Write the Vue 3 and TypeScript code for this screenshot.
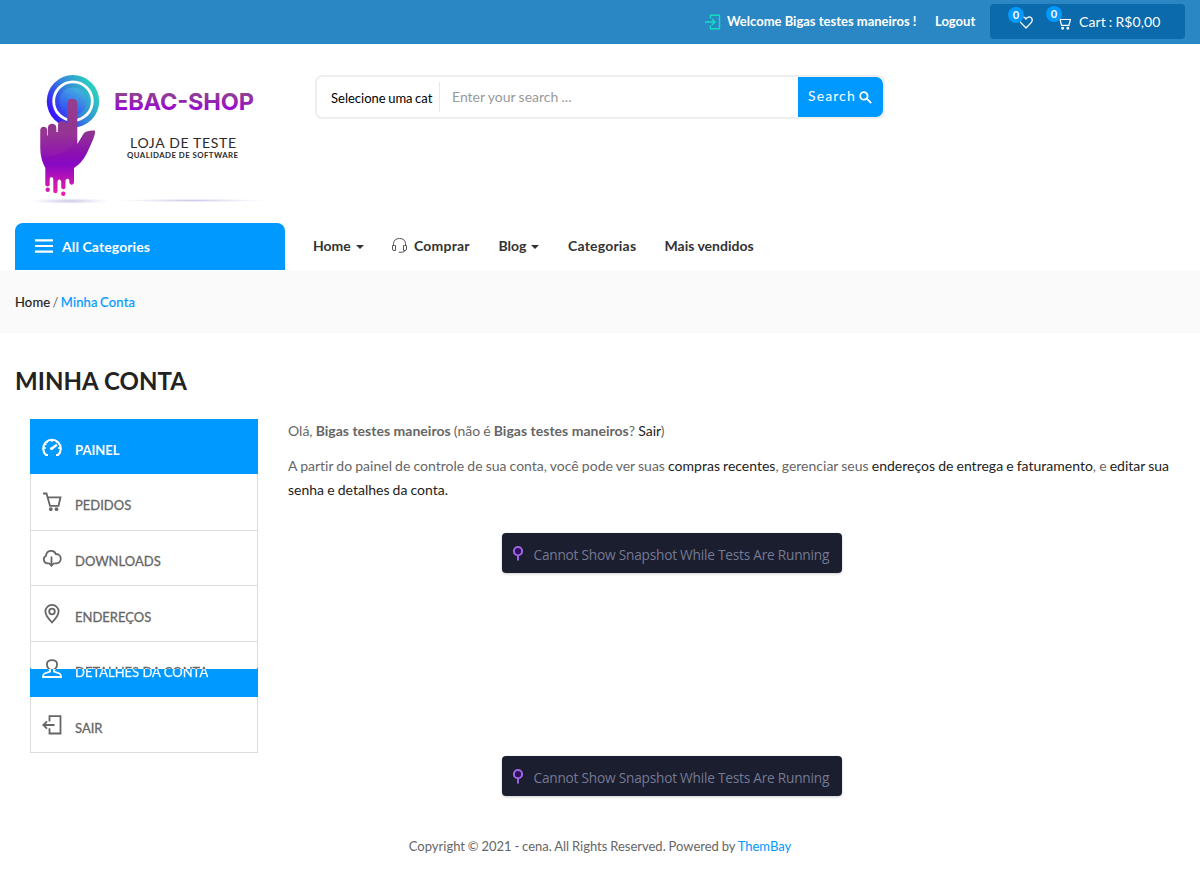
<script setup lang="ts">
interface MenuItem {
  label: string
  icon: string
  state?: 'active' | 'half'
}

const account: MenuItem[] = [
  { label: 'PAINEL', icon: 'gauge', state: 'active' },
  { label: 'PEDIDOS', icon: 'cart' },
  { label: 'DOWNLOADS', icon: 'cloud' },
  { label: 'ENDEREÇOS', icon: 'pin' },
  { label: 'DETALHES DA CONTA', icon: 'user', state: 'half' },
  { label: 'SAIR', icon: 'exit' },
]
</script>

<template>
  <div class="page">
    <div class="topbar">
      <svg class="login" width="16" height="16" viewBox="0 0 16 16" fill="none" stroke="#10e0c0" stroke-width="1.4">
        <path d="M5.500 4.500V1.300h9v13.400h-9v-3.200M0 8h9.500M7 5l3 3-3 3" />
      </svg>
      <span class="welcome">Welcome Bigas testes maneiros !</span>
      <a class="logout">Logout</a>
      <div class="cartbox">
        <span class="mini wish">
          <svg width="14" height="13" viewBox="0 0 14 13" fill="none" stroke="#fff" stroke-width="1.3">
            <path d="M7 12 1.800 6.600C.3 5 .5 2.600 2 1.500 3.600.4 5.800.9 7 3c1.200-2.100 3.400-2.600 5-1.500 1.500 1.100 1.700 3.500.2 5.100Z" />
          </svg>
          <b>0</b>
        </span>
        <span class="mini bag">
          <svg width="14" height="14" viewBox="0 0 20 20" fill="none" stroke="#fff" stroke-width="1.700">
            <path d="M0 2h3.500l3 11.500h10.500l2.200-8.500H4.500" />
            <circle cx="8" cy="17.500" r="1.200" /><circle cx="15.500" cy="17.500" r="1.200" />
          </svg>
          <b>0</b>
        </span>
        <span class="total">Cart : R$0,00</span>
      </div>
    </div>

    <header class="header">
      <svg class="logo" width="250" height="145" viewBox="0 0 250 145">
        <defs>
          <linearGradient id="ring" x1="0" y1="0.800" x2="1" y2="0.200">
            <stop offset="0.050" stop-color="#3808ff" /><stop offset="0.500" stop-color="#3484dc" /><stop offset="1" stop-color="#2ae0b8" />
          </linearGradient>
          <linearGradient id="disc" x1="0.100" y1="1" x2="0.700" y2="0">
            <stop offset="0" stop-color="#3040f4" /><stop offset="1" stop-color="#42b4de" />
          </linearGradient>
          <linearGradient id="hand" gradientUnits="userSpaceOnUse" x1="0" y1="34" x2="0" y2="130">
            <stop offset="0" stop-color="#983e90" /><stop offset="0.350" stop-color="#903490" /><stop offset="0.580" stop-color="#8a0eb4" /><stop offset="0.680" stop-color="#8808c4" /><stop offset="1" stop-color="#f020a8" />
          </linearGradient>
          <linearGradient id="brand" x1="0" y1="0" x2="0" y2="1">
            <stop offset="0.200" stop-color="#904290" /><stop offset="0.850" stop-color="#9a00da" />
          </linearGradient>
          <radialGradient id="shade">
            <stop offset="0" stop-color="#8878c0" stop-opacity="0.420" /><stop offset="1" stop-color="#a8a0d8" stop-opacity="0" />
          </radialGradient>
        </defs>
        <ellipse cx="50" cy="136" rx="40" ry="3" fill="url(#shade)" />
        <ellipse cx="172" cy="135.500" rx="75" ry="1.700" fill="url(#shade)" />
        <circle cx="53" cy="36.200" r="26.200" fill="url(#ring)" />
        <circle cx="53" cy="36.200" r="19.300" fill="none" stroke="#fff" stroke-width="2.800" />
        <circle cx="53" cy="36.200" r="13.700" fill="url(#disc)" />
        <path fill="url(#hand)" d="M20.300 65C20.300 60.500 27 60.500 27.200 65V70.500H28V62.500C28 57.500 36.300 57.500 36.300 62.500V67H38V60C38 54.500 47.200 54.500 47.200 60V38C47.200 32.300 57.300 32.300 57.300 38V79L64 68Q67 65 75 65.500Q75.500 69 72 77L67 88Q62 98 54 103V117C54 120.500 49.300 120.500 49.300 117V115.500C49.300 113 45.500 113 45.500 116V122C45.500 125 41.200 125 41.200 122V117C41.200 113.500 37.500 113.500 37.500 117V126C37.500 129 33.300 129 33.300 126V114C33.300 111.500 29.700 111.500 29.700 114V119.500C29.700 122 25.300 122 25.300 119.500V103Q20.300 94 20.300 83Z" />
        <path fill="#b13ca0" opacity="0.180" d="M57.300 70C56 82 38 94 20.300 91V64h37Z" />
        <circle cx="27.700" cy="124.700" r="2.200" fill="#d51cac" /><circle cx="43.300" cy="128.700" r="2.200" fill="#ee20aa" />
        <text class="brand" x="94" y="45.300" textLength="140" fill="url(#brand)">EBAC-SHOP</text>
        <text class="tag" x="110" y="82.800" textLength="106">LOJA DE TESTE</text>
        <text class="sub" x="107" y="93" textLength="111">QUALIDADE DE SOFTWARE</text>
      </svg>
      <form class="search">
        <span class="cat">Selecione uma cat</span>
        <span class="placeholder">Enter your search ...</span>
        <span class="go"><span class="label">Search</span>
          <svg width="13" height="13" viewBox="0 0 13 13" fill="none" stroke="#fff" stroke-width="1.800"><circle cx="4.900" cy="4.900" r="3.700" /><path d="m7.700 7.700 4.500 4.500" /></svg>
        </span>
      </form>
    </header>

    <nav class="nav">
      <div class="all">
        <svg width="18" height="14" viewBox="0 0 18 14" stroke="#fff" stroke-width="2.200"><path d="M0 1.300h18M0 7h18M0 12.700h18" /></svg>
        <span>All Categories</span>
      </div>
      <a class="n-home">Home<i class="caret" /></a>
      <a class="n-buy">
        <svg width="15" height="15" viewBox="0 0 15 15" fill="none" stroke="#555" stroke-width="1">
          <path d="M2.500 7.500h-2v3.500q0 1.500 1.500 1.500h1.500v-5Zm10 0h2v3.500q0 1.500-1.500 1.500h-1.500v-5ZM1.500 7.500V5.500Q2 .5 7.500.5t6 5v2M12.800 12.500q-.3 1.700-2.300 1.700H6.800" />
        </svg>
        Comprar
      </a>
      <a class="n-blog">Blog<i class="caret" /></a>
      <a class="n-cat">Categorias</a>
      <a class="n-top">Mais vendidos</a>
    </nav>

    <div class="crumbs"><span class="home">Home</span> / <a>Minha Conta</a></div>

    <h1>MINHA CONTA</h1>

    <main class="main">
      <ul class="menu">
        <li v-for="item in account" :key="item.label" :class="item.state">
          <svg width="20" height="20" viewBox="0 0 20 20" fill="none" stroke="currentColor" stroke-width="1.800">
            <defs>
              <linearGradient id="split" gradientUnits="userSpaceOnUse" x1="0" y1="0" x2="0" y2="20">
                <stop offset="0.480" stop-color="#666" /><stop offset="0.480" stop-color="#fff" />
              </linearGradient>
            </defs>
            <template v-if="item.icon === 'gauge'">
              <path stroke-width="2.200" d="M6 18H4A8.800 8.800 0 1 1 16 18H14" />
              <path stroke-width="1.300" d="M10 2v3M4.200 4.200l1.500 1.500M15.800 4.200l-1.300 1.300M1.500 11H4M18.500 11H16M2.500 7l2 .8" />
              <path stroke-width="2.400" d="M9.500 11.800 15 7.800" /><circle cx="9.500" cy="11.500" r="1.600" fill="currentColor" stroke="none" />
            </template>
            <template v-else-if="item.icon === 'cart'">
              <path d="M1 1.500h3.500l3.500 12.300h8.500l2-8.500H5.500" /><circle cx="8.800" cy="17.200" r="1" /><circle cx="14.500" cy="17.200" r="1" />
            </template>
            <path v-else-if="item.icon === 'cloud'" d="M7 15.300H5a4 4 0 0 1-1-7.500C4.500 2 12 1.300 13.800 6a4.700 4.700 0 0 1 1.200 9.300H12.500M9.500 8.500v9M6.800 15l2.700 2.800 2.700-2.800" />
            <template v-else-if="item.icon === 'pin'">
              <path d="M10 18.500Q3.400 11.500 3.400 7.500a6.600 6.600 0 0 1 13.200 0Q16.600 11.500 10 18.500Z" /><circle cx="10" cy="7.500" r="2.800" />
            </template>
            <path v-else-if="item.icon === 'user'" stroke="url(#split)" d="M8 10.500C5.500 9 4.800 6.700 5 4.800 5.200-.2 14.800-.2 15 4.800c.2 1.900-.5 4.200-3 5.700v2l5.500 2q1.500.6 1.500 3.500H1q0-2.900 1.500-3.500l5.500-2Z" />
            <path v-else d="M7.500 6.500V1.200H18.500V18.500H7.500V13.300M1.500 10H12.500M5 6.300 1.300 10 5 13.700" />
          </svg>
          <span>{{ item.label }}</span>
        </li>
      </ul>
      <section class="content">
        <p class="hello">Olá, <b>Bigas testes maneiros</b> (não é <b>Bigas testes maneiros</b>? <a>Sair</a>)</p>
        <p class="intro">A partir do painel de controle de sua conta, você pode ver suas <a>compras recentes</a>, gerenciar seus <a>endereços de entrega e faturamento</a>, e <a>editar sua<br />senha e detalhes da conta.</a></p>
        <div v-for="n in 2" :key="n" class="notice">
          <svg width="12" height="16" viewBox="0 0 12 16"><path d="M6 9v6.500" stroke="#9f62e6" stroke-width="2" /><circle cx="6" cy="6.200" r="4.100" fill="#321060" stroke="#a066e4" stroke-width="2" /></svg>
          <span>Cannot Show Snapshot While Tests Are Running</span>
        </div>
      </section>
    </main>

    <footer>Copyright © 2021 - cena. All Rights Reserved. Powered by <a>ThemBay</a></footer>
  </div>
</template>

<style>
body { margin: 0; background: #fff; }
</style>

<style scoped>
* { box-sizing: border-box; }
.page { width: 1200px; height: 892px; overflow: hidden; font: 14px/24px Lato, sans-serif; color: #666; }
.page > *, .nav > *, .search > * { white-space: nowrap; }
.topbar { height: 44px; background: #2a87c4; display: flex; align-items: center; justify-content: flex-end; padding: 0 15px 1px 0; color: #fff; }
.login { margin: 1px 6px 0 0; }
.welcome, .logout { font-weight: 700; font-size: 13px; margin-top: -1px; }
.welcome { width: 190px; }
.logout { width: 41px; margin-right: 14px; margin-left: 18px; }
.cartbox { width: 195px; height: 35px; background: #0b6aab; border-radius: 4px; display: flex; align-items: center; padding-left: 29px; }
.mini { position: relative; width: 38px; display: flex; }
.mini svg { margin-top: 2px; }
.mini.bag svg { margin-top: 3px; }
.mini b { position: absolute; left: -11px; top: -7px; width: 16px; height: 16px; border-radius: 50%; background: #09f; font-size: 11px; line-height: 16px; text-align: center; }
.mini.bag { width: 22px; }
.total { font-size: 14px; padding-top: 1px; word-spacing: -0.600px; letter-spacing: 0.080px; }
.header { height: 179px; display: flex; padding: 21px 15px 0 20px; }
.logo { width: 250px; height: 145px; flex: none; }
.brand { font: 700 23.500px Inter, sans-serif; }
.tag { font: 14px Lato, sans-serif; fill: #2b2b2b; }
.sub { font: 700 7.800px Lato, sans-serif; fill: #2b2b2b; }
.search { width: 570px; height: 44px; margin: 10px 0 0 45px; border: 2px solid #efefef; border-radius: 7px; display: flex; align-items: center; }
.cat { width: 123px; padding-left: 14px; height: 30px; line-height: 33px; border-right: 1px solid #e8e8e8; font-size: 13px; color: #000; word-spacing: -0.800px; }
.placeholder { flex: 1; padding-left: 12px; color: #999; word-spacing: -0.300px; }
.go { width: 85px; height: 40px; background: #09f; color: #fff; border-radius: 0 7px 7px 0; display: flex; align-items: center; gap: 3px; padding-left: 10px; letter-spacing: 1.100px; }
.go .label { margin-top: -2px; }
.go svg { margin-top: 1px; }
.nav { height: 48px; display: flex; padding-left: 15px; font-weight: 700; color: #333; line-height: 46px; }
.all { width: 270px; height: 47px; background: #09f; border-radius: 8px 8px 0 0; color: #fff; font-size: 14px; display: flex; align-items: center; gap: 9px; padding: 1px 0 0 20px; margin-right: 28px; letter-spacing: 0.100px; }
.all svg { margin-top: -2px; }
.n-home { width: 79px; }
.n-buy { width: 106.500px; height: 46px; display: flex; align-items: center; gap: 7px; letter-spacing: 0.200px; }
.n-buy svg { margin-top: -2px; }
.n-blog { width: 69.500px; }
.n-cat { width: 96.500px; letter-spacing: 0.200px; }
.caret { display: inline-block; margin-left: 5px; vertical-align: 2px; border: 4px solid transparent; border-top-color: #333; border-bottom: 0; }
.crumbs { height: 62px; background: #fafafa; padding-left: 15px; line-height: 62px; font-size: 13px; word-spacing: -1px; }
.crumbs a, .home { -webkit-text-stroke: 0.200px; letter-spacing: 0.150px; }
.home { color: #222; }
.crumbs a, footer a { color: #09f; }
h1 { height: 86px; margin: 0; padding: 33px 0 0 15px; font-size: 24px; line-height: 29px; color: #222; letter-spacing: 0.080px; }
.main { height: 400px; display: flex; padding: 0 15px 0 30px; }
.menu { list-style: none; margin: 0; padding: 0; width: 228px; height: 334px; display: grid; grid-template-rows: 55px 57px 55px 56px 55px 56px; }
.menu li { display: flex; align-items: center; gap: 13px; padding-left: 11px; border: 1px solid #ddd; border-top: 0; font-size: 13px; -webkit-text-stroke: 0.300px; }
.menu li span { padding-top: 6px; }
.menu .active { background: #09f; border-color: #09f; color: #fff; font-weight: 700; -webkit-text-stroke: 0; }
.menu .active svg { margin-top: 2px; }
.menu .active span { padding-top: 8px; }
.menu .half { background: linear-gradient(#fff 27px, #09f 27px) border-box; border-color: transparent; border-image: linear-gradient(#ddd 49%, #09f 49%) 1; border-image-width: 0 1px 1px; }
.menu .half span { background: linear-gradient(#666 15px, #fff 15px); background-clip: text; -webkit-background-clip: text; color: transparent; -webkit-text-stroke: 0.300px transparent; }
.content { padding-left: 30px; word-spacing: -0.480px; }
.content b { word-spacing: 0; letter-spacing: 0.020px; }
.content a { color: #222; }
.hello { margin: 0 0 11px; }
.intro { margin: 0; letter-spacing: 0.007px; }
.notice { width: 340px; height: 40px; margin: 31px 0 183px 214px; background: #1b1e2e; border-radius: 4px; box-shadow: 0 1px 3px #0003; display: flex; align-items: center; gap: 9.500px; padding-left: 10px; font: 13.700px "Open Sans", sans-serif; letter-spacing: -0.230px; color: #747994; word-spacing: 0; }
.notice svg { flex: none; }
.notice span { padding-top: 2px; }
.notice + .notice { margin-top: 0; margin-bottom: 0; }
footer { margin-top: 15px; text-align: center; font-size: 13px; word-spacing: -0.500px; }
</style>
